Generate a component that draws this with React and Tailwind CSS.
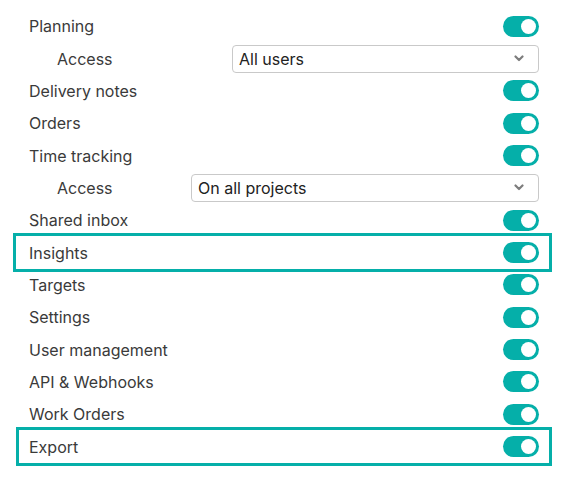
const rows = [
  { label: 'Planning' },
  { label: 'Access', select: 'All users', width: 'w-[307px]' },
  { label: 'Delivery notes' },
  { label: 'Orders' },
  { label: 'Time tracking' },
  { label: 'Access', select: 'On all projects', width: 'w-[348px]' },
  { label: 'Shared inbox' },
  { label: 'Insights', highlight: 'insights' },
  { label: 'Targets' },
  { label: 'Settings' },
  { label: 'User management' },
  { label: 'API & Webhooks' },
  { label: 'Work Orders' },
  { label: 'Export', highlight: 'export' },
];

function Toggle() {
  return (
    <div className="w-[36px] h-[21px] rounded-full bg-[#05afa9] flex items-center justify-end pr-[3px] shrink-0">
      <div className="w-[15px] h-[15px] rounded-full bg-white" />
    </div>
  );
}

function Select({ value, width }) {
  return (
    <div className={`${width} h-[28px] border border-[#c9c9c9] rounded-[4px] bg-white flex items-center justify-between pl-[6px] pr-[14px]`}>
      <span className="text-[16px] text-[#222]">{value}</span>
      <svg width="10" height="7" viewBox="0 0 10 7" fill="none">
        <path d="M1.5 1.5L5 5L8.5 1.5" stroke="#7d7d7d" strokeWidth="2.2" strokeLinecap="round" strokeLinejoin="round" />
      </svg>
    </div>
  );
}

export default function App() {
  return (
    <div className="w-[570px] h-[489px] bg-white pt-[10px] pl-[16px] pr-[21px]" style={{ fontFamily: 'Inter, "Noto Sans", sans-serif' }}>
      {rows.map((row, i) => {
        const outline =
          row.highlight === 'insights'
            ? 'outline-[3.5px] outline outline-[#05afa9] pl-[13px]'
            : row.highlight === 'export'
            ? 'outline-[3.5px] outline outline-[#05afa9] ml-[3px] pl-[10px]'
            : 'pl-[13px]';
        return (
          <div key={i} className={`h-[32.35px] flex items-center justify-between pr-[10px] ${outline}`}>
            <span className={`text-[16px] text-[#3a3a3a] ${row.select ? 'pl-[28px]' : ''}`}>{row.label}</span>
            {row.select ? <Select value={row.select} width={row.width} /> : <Toggle />}
          </div>
        );
      })}
    </div>
  );
}
